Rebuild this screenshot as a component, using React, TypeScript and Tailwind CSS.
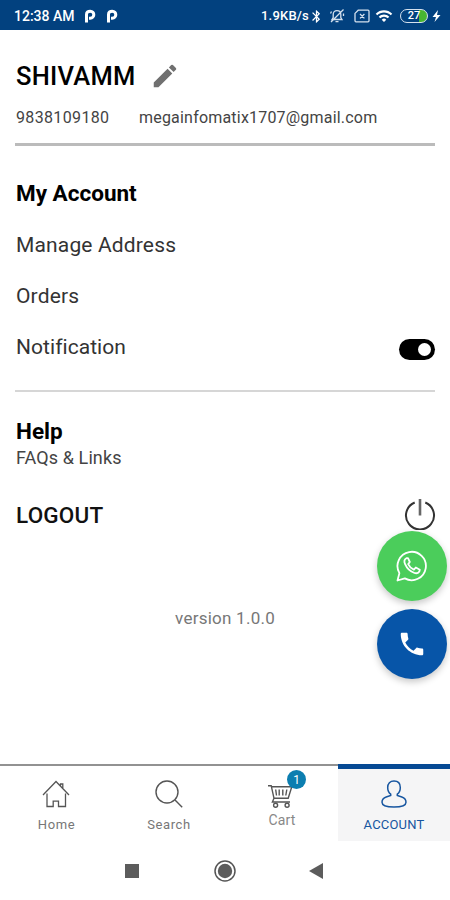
import type { ReactNode } from 'react';
import { MdEdit, MdPhone, MdBluetooth, MdWifi } from 'react-icons/md';

const menuItems = ['Manage Address', 'Orders'];

function ParkingIcon() {
  return (
    <svg viewBox="0 0 12 14" className="h-[14px] w-3" fill="none" stroke="white" strokeWidth="3">
      <path d="M2.5 13.4V5.6C2.5 3.2 4 2.2 6.2 2.2C11 2.2 11 9.2 6.2 9.2H5" />
    </svg>
  );
}

function StatusBar() {
  return (
    <header className="flex h-[30px] shrink-0 items-center bg-[#02417f] pl-[14px] pr-[9px] pt-[2px] text-white">
      <span className="w-[70px] whitespace-nowrap text-[14px] font-medium">12:38 AM</span>
      <ParkingIcon />
      <span className="w-[10px]" />
      <ParkingIcon />
      <span className="ml-auto whitespace-nowrap text-[13px] font-medium tracking-[0.2px]">1.9KB/s</span>
      <MdBluetooth className="mr-px h-[15px] w-[15px]" />
      <svg viewBox="0 0 16 16" className="ml-[4px] h-4 w-4" fill="none" stroke="#d5e1ee" strokeWidth="1.3">
        <path d="M3 11.5H13L11.8 9.5V6.5C11.8 4.2 10.4 2.7 8 2.7S4.2 4.2 4.2 6.5V9.5L3 11.5ZM6.5 13.7H9.5M2 14L14.5 1.5M1.5 5.5L2.5 3.5M14.5 5.5V8" />
      </svg>
      <svg viewBox="0 0 16 14" className="ml-[9px] h-[14px] w-4" fill="none" stroke="#d5e1ee" strokeWidth="1.3">
        <path d="M4.2 1.2H14a1 1 0 0 1 1 1v9.6a1 1 0 0 1-1 1H2a1 1 0 0 1-1-1V4.4ZM6 5l4.4 4.4M10.4 5L6 9.4" />
      </svg>
      <MdWifi className="ml-[5px] h-[18px] w-[18px]" />
      <span className="ml-[7px] flex h-[14px] w-[28px] shrink-0 items-center justify-center rounded-full border-[1.5px] border-[#d5e1ee] bg-gradient-to-r from-transparent from-70% to-[#47b531] to-70% text-[11px] font-medium">
        27
      </span>
      <svg viewBox="0 0 9 14" className="ml-[4px] h-[14px] w-[9px]" fill="white">
        <path d="M6 1L.5 8H4L2.5 13L8.5 6H5Z" />
      </svg>
    </header>
  );
}

function PowerIcon() {
  return (
    <svg viewBox="0 0 32 32" className="-mr-px h-8 w-8" fill="none" stroke="#333" strokeWidth="2">
      <path d="M10.7 4.5A14 14 0 1 0 21.3 4.5" />
      <path d="M16 1V17.5" strokeWidth="2.6" stroke="#666" />
    </svg>
  );
}

function WhatsAppIcon() {
  return (
    <svg viewBox="0 0 32 32" className="h-8 w-8" fill="none" stroke="white" strokeWidth="1.8" strokeLinejoin="round">
      <path d="M1.5 30.5L3.4 23.1A14.2 14.2 0 1 1 8.8 28.4Z" />
      <path d="M10.4 8.2C8.5 9.2 7.9 11.5 9.1 14.2C11 18.5 14.4 21.7 18.5 23C21.3 23.9 23.7 22.4 23.8 19.7L19.8 17.5L17.9 19.7C15.5 18.7 13.4 16.7 12.2 14.1L13.8 12L12 8.2Z" />
    </svg>
  );
}

function HomeIcon() {
  return (
    <svg viewBox="0 0 28 28" className="h-7 w-7" fill="none" stroke="#555" strokeWidth="1.3">
      <path d="M1 15L14 1.5L27 15M5 13.5V26.5H11.2V21.2H16.5V26.5H23.5V13.5M18.5 5.5V4H20.8V8.4" />
    </svg>
  );
}

function SearchIcon() {
  return (
    <svg viewBox="0 0 28 28" className="h-7 w-7" fill="none" stroke="#555" strokeWidth="1.4">
      <circle cx="12" cy="12" r="11" />
      <path d="M20 20L27.2 27.2" />
    </svg>
  );
}

function CartIcon() {
  return (
    <svg viewBox="0 0 26 26" className="h-[26px] w-[26px]" fill="none" stroke="#555" strokeWidth="1.4">
      <path d="M1 2.7H4.2L7 15.3H21.2L24.8 3.7H4.7M7 15.3L5.4 19H23M8.7 6.5L9.5 12.5M12.2 6.5V12.5M15.8 6.5V12.5M19.8 6.5L18.8 12.5" />
      <circle cx="8.6" cy="22.3" r="2" />
      <circle cx="20.1" cy="22.3" r="2" />
    </svg>
  );
}

function AccountIcon() {
  return (
    <svg viewBox="0 0 26 28" className="h-7 w-[26px]" fill="none" stroke="#1756a0" strokeWidth="1.5">
      <path d="M9.7 14.1C7.8 12.8 6.7 10.4 6.7 7.5C6.7 3.4 9.1 1 13 1S19.3 3.4 19.3 7.5C19.3 10.4 18.2 12.8 16.3 14.1V15.5L20.8 17C23.7 18 25 19.8 25 22.2C25 25.5 20.5 27 13 27S1 25.5 1 22.2C1 19.8 2.3 18 5.2 17L9.7 15.5Z" />
    </svg>
  );
}

function Tab({ label, icon, active }: { label: string; icon: ReactNode; active?: boolean }) {
  return (
    <button
      className={`flex h-[77px] flex-col items-center ${
        active
          ? 'border-t-[5px] border-[#064a94] bg-[#f5f5f6] pt-[11px] text-[#1756a0]'
          : 'border-t-2 border-[#929292] pt-[14px] text-[#777]'
      }`}
    >
      {icon}
      <span className={`mt-[9px] text-[13px] leading-4 ${active ? 'tracking-[0.2px]' : 'pl-px tracking-[0.6px]'}`}>{label}</span>
    </button>
  );
}

export default function App() {
  return (
    <div className="relative flex h-[900px] w-[450px] flex-col overflow-hidden bg-white font-['Roboto',sans-serif] text-black">
      <StatusBar />

      <main className="flex flex-1 flex-col px-[15px]">
        <section className="h-[116px] border-b-[3px] border-[#bbb] pl-px pt-[30px]">
          <div className="flex h-8 items-center">
            <h1 className="w-[134px] text-[25.5px] font-medium tracking-[0.25px]">SHIVAMM</h1>
            <MdEdit className="h-[30px] w-[30px] text-[#707070]" />
          </div>
          <div className="mt-[14px] flex h-6 items-center text-[16px] text-[#444]">
            <span className="w-[123px] tracking-[0.35px]">9838109180</span>
            <span className="tracking-[0.2px]">megainfomatix1707@gmail.com</span>
          </div>
        </section>

        <section className="h-[246px] border-b-2 border-[#d6d6d6] pt-[31px] text-[21px] text-[#333]">
          <h2 className="h-8 pl-px text-[22.5px] font-bold leading-8 text-black">My Account</h2>
          <div className="mt-[11px] pl-px">
            {menuItems.map((item) => (
              <div key={item} className="flex h-[51px] items-center tracking-[0.15px]">
                {item}
              </div>
            ))}
            <div className="flex h-[51px] items-center justify-between">
              <span className="tracking-[0.05px]">Notification</span>
              <span className="mt-[3px] flex h-[21px] w-9 items-center justify-end rounded-full bg-black pr-[4px]">
                <span className="h-[13px] w-[13px] rounded-full bg-white" />
              </span>
            </div>
          </div>
        </section>

        <section className="pl-px pt-[25px]">
          <h2 className="h-[28px] text-[22.5px] font-bold leading-[28px]">Help</h2>
          <p className="h-[26px] text-[18px] leading-[26px] tracking-[0.1px] text-[#444]">FAQs &amp; Links</p>
        </section>

        <div className="mt-[27px] flex h-8 items-center justify-between pl-px">
          <span className="mt-[4px] text-[22.5px] font-medium tracking-[0.2px] text-[#111]">LOGOUT</span>
          <PowerIcon />
        </div>
        <p className="mt-[76px] text-center text-[17px] leading-6 tracking-[0.25px] text-[#777]">version 1.0.0</p>
      </main>

      {/* floating contact buttons */}
      <div className="absolute right-[3px] top-[531px] flex flex-col gap-2">
        <button className="flex h-[70px] w-[70px] items-center justify-center rounded-full bg-[#4bcd5b] shadow-[0_3px_7px_rgba(0,0,0,0.22)]">
          <WhatsAppIcon />
        </button>
        <button className="flex h-[70px] w-[70px] items-center justify-center rounded-full bg-[#0755a8] shadow-[0_3px_7px_rgba(0,0,0,0.22)]">
          <MdPhone className="h-[30px] w-[30px] text-white" />
        </button>
      </div>

      <nav className="grid h-[77px] shrink-0 grid-cols-[112px_113px_113px_112px]">
        <Tab label="Home" icon={<HomeIcon />} />
        <Tab label="Search" icon={<SearchIcon />} />
        <div className="relative flex flex-col items-center border-t-2 border-[#929292] pr-[3px] pt-[17px] text-[#888]">
          <CartIcon />
          <span className="ml-[4px] mt-[3px] text-[14px] leading-4 tracking-[0.1px]">Cart</span>
          <span className="absolute left-[62px] top-[4px] flex h-[19px] w-[19px] items-center justify-center rounded-full bg-[#0c7eb0] text-[12px] text-white">
            1
          </span>
        </div>
        <Tab label="ACCOUNT" icon={<AccountIcon />} active />
      </nav>

      <div className="flex h-[59px] shrink-0 items-center pl-[125px]">
        <span className="h-[14px] w-[14px] bg-[#5c5c5c]" />
        <svg viewBox="0 0 22 22" className="ml-[75px] h-[22px] w-[22px]">
          <circle cx="11" cy="11" r="10" fill="none" stroke="#555" strokeWidth="1.5" />
          <circle cx="11" cy="11" r="7.2" fill="#5c5c5c" />
        </svg>
        <svg viewBox="0 0 14 16" className="ml-[73px] h-4 w-[14px]">
          <path d="M0 8L14 0V16Z" fill="#5c5c5c" />
        </svg>
      </div>
    </div>
  );
}
